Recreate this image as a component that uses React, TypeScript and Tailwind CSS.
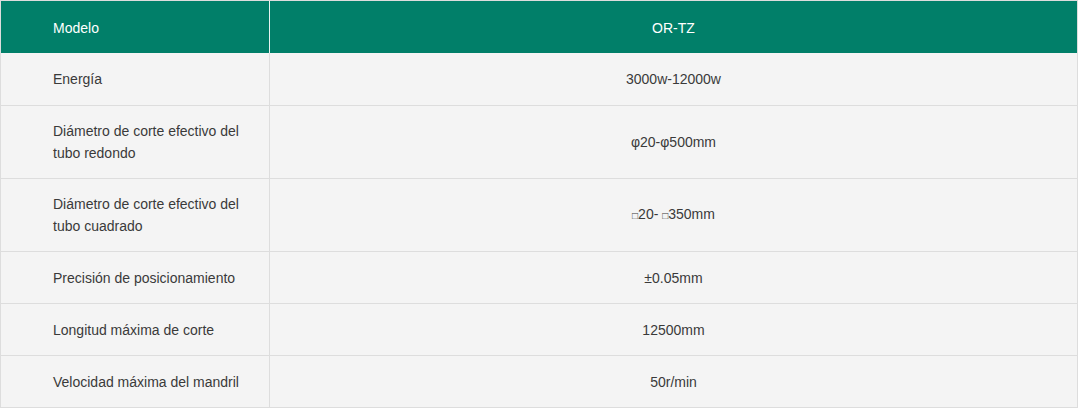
const rows: { label: string[]; value: React.ReactNode; h: string }[] = [
  { label: ['Energía'], value: '3000w-12000w', h: 'h-[53px]' },
  { label: ['Diámetro de corte efectivo del', 'tubo redondo'], value: 'φ20-φ500mm', h: 'h-[73px]' },
  {
    label: ['Diámetro de corte efectivo del', 'tubo cuadrado'],
    value: (
      <span>
        <span className="text-[10px]">□</span>20- <span className="text-[10px]">□</span>350mm
      </span>
    ),
    h: 'h-[73px]',
  },
  { label: ['Precisión de posicionamiento'], value: '±0.05mm', h: 'h-[52px]' },
  { label: ['Longitud máxima de corte'], value: '12500mm', h: 'h-[52px]' },
  { label: ['Velocidad máxima del mandril'], value: '50r/min', h: 'h-[52px]' },
];

export default function App() {
  return (
    <div className="w-[1080px] h-[409px] bg-white font-['Liberation_Sans',Arial,sans-serif] text-[14px] leading-[22px] text-[#3a3a3a]">
      <div className="w-[1078px] border-t border-l border-r border-[#dddddd]">
        <div className="grid grid-cols-[269px_1fr] h-[52px] bg-[#017f69] text-white">
          <div className="flex items-center pt-px pl-[52px] border-r border-[#e8f3f0]">Modelo</div>
          <div className="flex items-center justify-center pt-px">OR-TZ</div>
        </div>
        {rows.map((r) => (
          <div key={r.label.join(' ')} className={`grid grid-cols-[269px_1fr] ${r.h} bg-[#f4f4f4] border-b border-[#dddddd]`}>
            <div className="flex flex-col justify-center pl-[52px] border-r border-[#dddddd]">
              {r.label.map((l) => (
                <span key={l}>{l}</span>
              ))}
            </div>
            <div className="flex items-center justify-center">{r.value}</div>
          </div>
        ))}
      </div>
    </div>
  );
}
